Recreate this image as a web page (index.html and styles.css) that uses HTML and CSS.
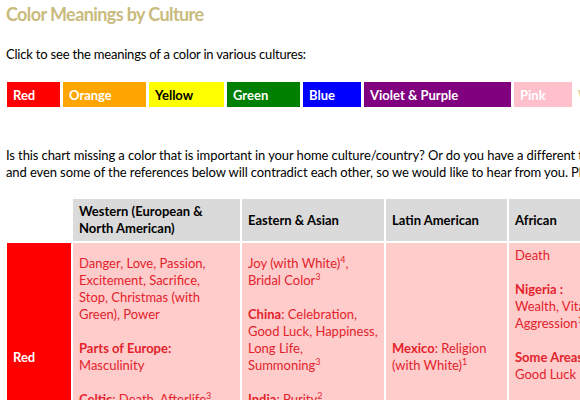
FILE: index.html
```
<!DOCTYPE html>
<html>
<head>
<meta charset="utf-8">
<link rel="stylesheet" href="styles.css">
</head>
<body>
<div class="page">
  <h1 class="title">Color Meanings by Culture</h1>
  <p class="intro">Click to see the meanings of a color in various cultures:</p>
  <div class="swatches">
    <span class="sw sw-red">Red</span>
    <span class="sw sw-orange">Orange</span>
    <span class="sw sw-yellow">Yellow</span>
    <span class="sw sw-green">Green</span>
    <span class="sw sw-blue">Blue</span>
    <span class="sw sw-purple">Violet &amp; Purple</span>
    <span class="sw sw-pink">Pink</span>
    <span class="sw sw-white">White</span>
  </div>
  <p class="note">Is this chart missing a color that is important in your home culture/country? Or do you have a different take on one of these colors? Color meanings vary,<br>and even some of the references below will contradict each other, so we would like to hear from you. Please let us know.</p>
  <table class="chart">
    <colgroup>
      <col class="c-label"><col class="c-west"><col class="c-east"><col class="c-latin"><col class="c-africa">
    </colgroup>
    <thead>
      <tr class="head-row">
        <th class="corner"></th>
        <th>Western (European &amp;<br>North American)</th>
        <th>Eastern &amp; Asian</th>
        <th>Latin American</th>
        <th>African</th>
      </tr>
    </thead>
    <tbody>
      <tr class="body-row">
        <th class="label label-red">Red</th>
        <td>Danger, Love, Passion,<br>Excitement, Sacrifice,<br>Stop, Christmas (with<br>Green), Power<br><br><b>Parts of Europe:</b><br>Masculinity<br><br><b>Celtic</b>: Death, Afterlife<sup>3</sup><br><br><b>Cherokees</b>: Success,<br>Triumph</td>
        <td>Joy (with White)<sup>4</sup>,<br>Bridal Color<sup>3</sup><br><br><b>China</b>: Celebration,<br>Good Luck, Happiness,<br>Long Life,<br>Summoning<sup>3</sup><br><br><b>India</b>: Purity<sup>2</sup><br><br><b>Thailand</b>: Color for<br>Sunday</td>
        <td><b>Mexico</b>: Religion<br>(with White)<sup>1</sup></td>
        <td>Death<br><br><b>Nigeria :</b><br>Wealth, Vitality,<br>Aggression<sup>1</sup><br><br><b>Some Areas:</b><br>Good Luck<br><br><b>South Africa:</b> Color of<br>Mourning<sup>3</sup><br><br><b>Egypt:</b> Mourning</td>
      </tr>
    </tbody>
  </table>
</div>
</body>
</html>
```
FILE: styles.css
```
html, body {
  margin: 0;
  padding: 0;
  background: #ffffff;
  overflow: hidden;
}
body {
  width: 580px;
  height: 400px;
  font-family: "Lato", "Liberation Sans", sans-serif;
  font-size: 13px;
  color: #000;
}
.page {
  padding-left: 6px;
  width: 900px;
}
.title {
  margin: 2px 0 0;
  font-size: 18px;
  line-height: 24px;
  letter-spacing: -0.6px;
  font-weight: bold;
  color: #c8bb7d;
}
.intro {
  margin: 20px 0 0;
  line-height: 17px;
  letter-spacing: -0.2px;
  white-space: nowrap;
}
.swatches {
  display: flex;
  gap: 3px;
  margin: 19px 0 0 1px;
  height: 25px;
}
.sw {
  display: flex;
  align-items: center;
  padding: 0 6px;
  font-weight: bold;
  color: #fff;
  box-sizing: border-box;
  white-space: nowrap;
}
.sw-red { background: #ff0000; width: 53px; }
.sw-orange { background: #ffa500; width: 83px; }
.sw-yellow { background: #ffff00; width: 75px; color: #000; }
.sw-green { background: #008000; width: 73px; }
.sw-blue { background: #0000ff; width: 58px; }
.sw-purple { background: #800080; width: 147px; }
.sw-pink { background: #ffc0cb; width: 58px; }
.sw-white { background: #fff; width: 60px; padding-left: 3px; color: #d8cf9c; }
.note {
  margin: 40px 0 0;
  line-height: 17px;
  letter-spacing: -0.1px;
  white-space: nowrap;
}
.chart {
  margin: 16px 0 0 -1px;
  border-collapse: separate;
  border-spacing: 2px;
  table-layout: fixed;
  width: 646px;
}
.c-label { width: 64px; }
.c-west { width: 167px; }
.c-east { width: 142px; }
.c-latin { width: 121px; }
.c-africa { width: 140px; }
.chart th, .chart td {
  padding: 0 6px;
  line-height: 17px;
  vertical-align: middle;
  text-align: left;
  white-space: nowrap;
}
.head-row { height: 42px; }
.head-row th {
  background: #dadada;
  font-weight: bold;
  color: #000;
}
.head-row th.corner { background: transparent; }
.body-row { height: 228px; }
.body-row td {
  background: #ffcccc;
  color: #e3232b;
}
.body-row b { font-weight: bold; }
.label {
  font-weight: bold;
  color: #fff;
}
.label-red { background: #ff0000; }
sup {
  font-size: 9px;
  line-height: 0;
  vertical-align: 5px;
}
```
